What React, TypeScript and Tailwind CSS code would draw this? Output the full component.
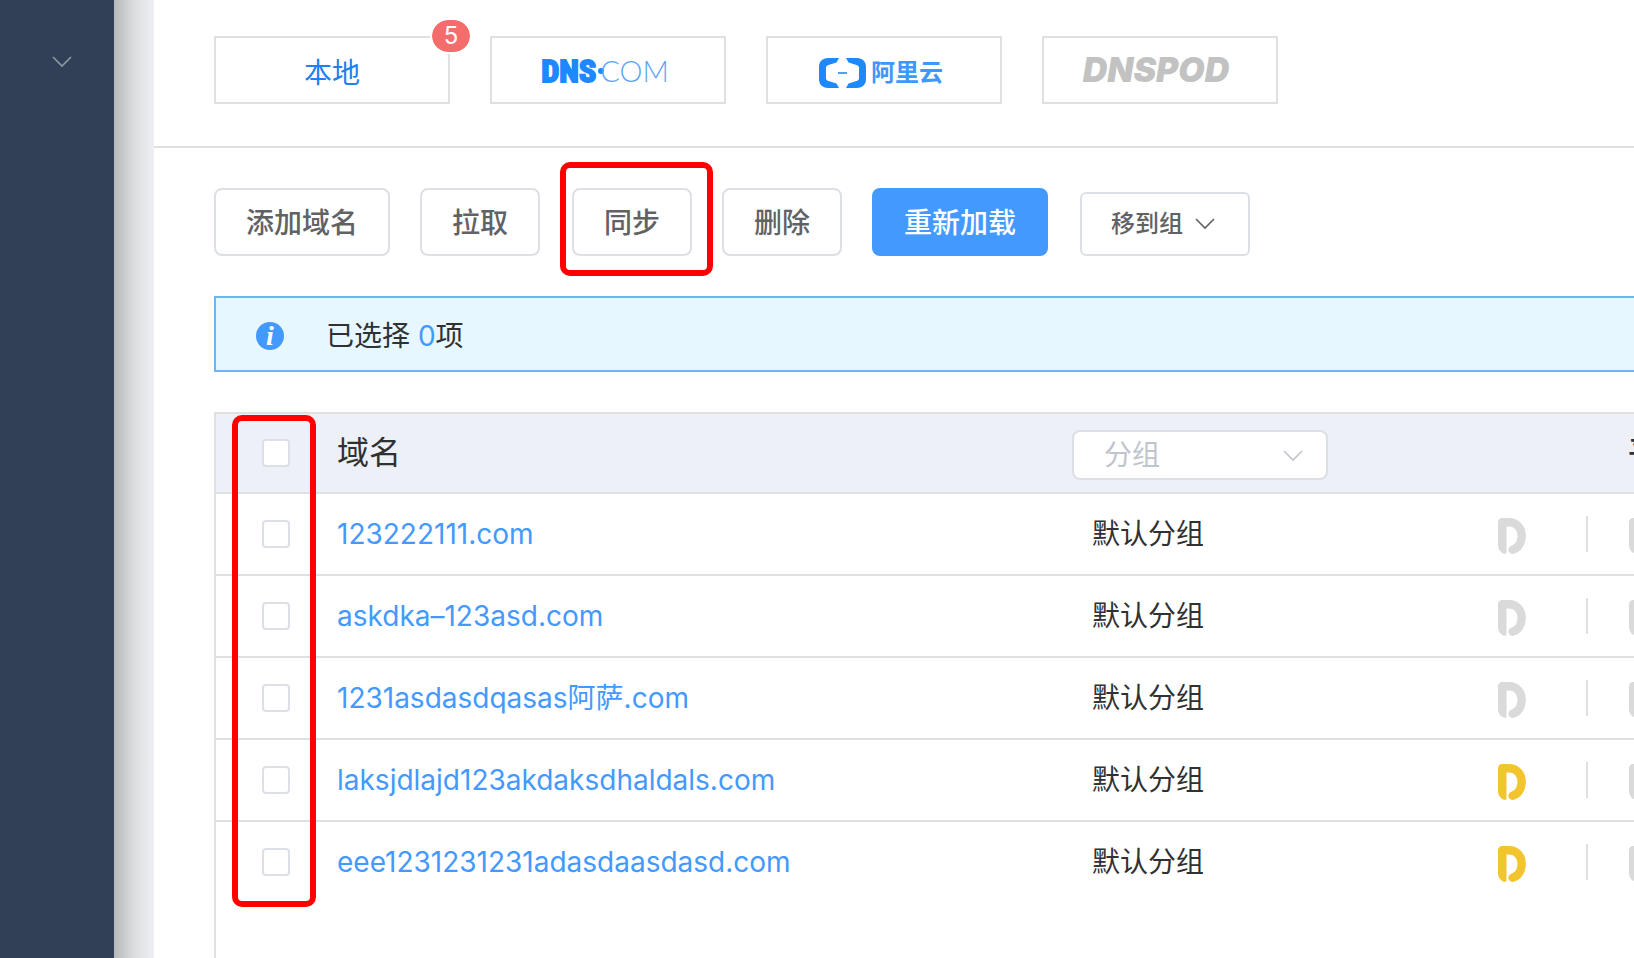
import React from 'react';

type Domain = { name: string; active: boolean };

const domains: Domain[] = [
  { name: '123222111.com', active: false },
  { name: 'askdka–123asd.com', active: false },
  { name: '1231asdasdqasas阿萨.com', active: false },
  { name: 'laksjdlajd123akdaksdhaldals.com', active: true },
  { name: 'eee1231231231adasdaasdasd.com', active: true },
];

function Chevron({ className }: { className: string }) {
  return (
    <svg viewBox="0 0 20 12" className={className} fill="none" stroke="currentColor" aria-hidden="true">
      <path d="M1 1l9 9 9-9" strokeWidth="1.6" />
    </svg>
  );
}

function ProviderMark({ className }: { className: string }) {
  return (
    <svg viewBox="0 0 28 36" className={className} aria-hidden="true">
      <path d="M0 5C0 1.500 1.500 0 5 0h3.500v34.500c0 1.100-1.200 1.600-2.600 1.200C2.500 34.500 0 31 0 27z" fill="currentColor" />
      <path d="M5 4.300h6c7.500 0 12.700 5.700 12.700 13.500 0 7-3.800 12.400-9.200 13.900" fill="none" stroke="currentColor" strokeWidth="8.400" strokeLinecap="round" />
    </svg>
  );
}

function DnsComLogo() {
  return (
    <span className="flex items-center pt-0.5 pr-1.5 leading-8">
      <span className="font-['Liberation_Sans_Narrow','Roboto_Condensed',sans-serif] text-[32px] font-bold text-[#1e88ff] [-webkit-text-stroke:2px_#1e88ff]">
        DNS
      </span>
      <span className="-mr-1 ml-0.5 size-1.5 rounded-full bg-[#1e88ff]" />
      <span className="font-[Lato,sans-serif] text-[29px] font-light text-[#5aa5fb]">COM</span>
    </span>
  );
}

function AliyunMark() {
  return (
    <svg viewBox="0 0 48 30" className="h-[30px] w-12" fill="#1e88ff" aria-hidden="true">
      <path d="M20 0H9C3.500 0 0 3.500 0 9v12c0 5.500 3.500 9 9 9h11l-2.500-4.500L9.500 23C7.700 22.500 7 21.500 7 20V10c0-1.500.7-2.500 2.500-3l8-2.500z" />
      <path d="M27 0h11c5.500 0 9 3.500 9 9v12c0 5.500-3.500 9-9 9H27l2.500-4.500 8-2.500c1.800-.5 2.500-1.500 2.500-3V10c0-1.500-.7-2.500-2.500-3l-8-2.500z" />
      <path d="M19 14h9v2h-9z" opacity=".8" />
    </svg>
  );
}

const tabClass = 'relative flex h-[68px] w-[236px] shrink-0 items-center justify-center border-2 border-[#e0e0e0] bg-white';
const buttonClass = 'h-[68px] shrink-0 rounded-lg border-2 border-[#dcdfe6] bg-white px-[30px] pt-0.5 font-medium text-[#606266]';
const checkClass = 'block size-7 appearance-none rounded-sm border-2 border-[#dcdfe6] bg-white checked:bg-[#4499ff]';

export default function App() {
  return (
    <div className="flex h-screen overflow-hidden bg-white font-[Inter,'Noto_Sans_CJK_SC',sans-serif] text-[28px] leading-10 text-[#303133]">
      <aside className="flex w-[114px] shrink-0 items-start justify-end bg-[#324057] pt-14 pr-[42px]">
        <button type="button" aria-label="展开菜单" className="text-[#8f98a6]">
          <Chevron className="h-3 w-5" />
        </button>
      </aside>
      <div className="w-10 shrink-0 bg-linear-to-r from-[#b7b8ba] via-[#dcdddf] to-[#eff0f3]" />
      <main className="flex min-w-0 flex-1 flex-col overflow-hidden">
        <nav className="flex shrink-0 gap-10 border-b-2 border-[#e0e0e0] pt-9 pb-[42px] pl-[60px]">
          <button type="button" className={`${tabClass} pt-1.5 text-[#2080f0]`}>
            本地
            <span className="absolute -top-5 -right-6 flex h-9 w-[42px] items-center justify-center rounded-full border-2 border-white bg-[#f56c6c] bg-clip-padding text-2xl text-white">
              5
            </span>
          </button>
          <button type="button" aria-label="DNS.COM" className={tabClass}>
            <DnsComLogo />
          </button>
          <button type="button" className={`${tabClass} gap-1 pt-1.5 pr-1.5 text-2xl font-bold text-[#3f97fb]`}>
            <AliyunMark />
            阿里云
          </button>
          <button type="button" className={`${tabClass} pr-2 text-[34px] font-black text-[#c2c2c2] italic`}>
            DNSPOD
          </button>
        </nav>
        <div className="flex shrink-0 items-end gap-8 pt-10 pl-[60px]">
          <div className="flex shrink-0 gap-[30px]">
            <button type="button" className={buttonClass}>添加域名</button>
            <button type="button" className={buttonClass}>拉取</button>
          </div>
          <div className="flex shrink-0 gap-[30px]">
            <div className="relative shrink-0">
              <button type="button" className={buttonClass}>同步</button>
              <span className="pointer-events-none absolute -top-[26px] -right-[21px] -bottom-5 -left-3 rounded-[10px] border-6 border-[#ff0000]" />
            </div>
            <button type="button" className={buttonClass}>删除</button>
            <button type="button" className="h-[68px] shrink-0 rounded-lg bg-[#4499ff] px-8 pt-0.5 font-medium text-white">重新加载</button>
          </div>
          <button type="button" className="flex h-16 w-[170px] shrink-0 items-center justify-center gap-3 rounded-md border-2 border-[#dcdfe6] pr-1 text-2xl font-medium text-[#606266]">
            移到组
            <Chevron className="h-3 w-5" />
          </button>
        </div>
        <div className="mt-10 ml-[60px] flex h-[76px] shrink-0 items-center border-2 border-r-0 border-[#6cb5ee] bg-[#e6f7ff] pt-1 pl-10">
          <span className="flex size-7 items-center justify-center rounded-full bg-[#4499ff] font-['Liberation_Serif',serif] text-[28px] leading-7 font-bold text-white italic">
            i
          </span>
          <span className="ml-[42px]">
            已选择 <span className="text-[#4499ff]">0</span>项
          </span>
        </div>
        <div className="relative mt-10 ml-[60px] flex-1 border-t-2 border-l-2 border-[#e0e0e0]">
          <table className="w-[1520px] table-fixed border-collapse text-left">
            <colgroup>
              <col className="w-[104px]" />
              <col className="w-[752px]" />
              <col className="w-[404px]" />
              <col className="w-[260px]" />
            </colgroup>
            <thead className="bg-[#edf0f6]">
              <tr className="h-[79px] border-b-2 border-[#e0e0e0]">
                <th className="pl-[46px]">
                  <input type="checkbox" aria-label="全选" className={checkClass} />
                </th>
                <th className="pl-[17px] text-[32px] font-normal">域名</th>
                <th className="pt-1 font-normal">
                  <div className="relative h-[50px] w-64">
                    <select aria-label="分组" className="size-full appearance-none rounded-lg border-2 border-[#dcdfe6] bg-white pl-[30px] text-[#c0c4cc]">
                      <option>分组</option>
                    </select>
                    <Chevron className="pointer-events-none absolute top-5 right-[25px] h-3 w-5 text-[#c0c4cc]" />
                  </div>
                </th>
                <th className="pb-1 pl-[152px] text-[30px] font-medium">平台</th>
              </tr>
            </thead>
            <tbody>
              {domains.map((domain) => (
                <tr key={domain.name} className="h-[82px] border-b-2 border-[#e0e0e0] last:border-transparent">
                  <td className="pl-[46px]">
                    <input type="checkbox" aria-label={domain.name} className={checkClass} />
                  </td>
                  <td className="pl-[17px]">
                    <a href="#domain" className="text-[#4499ff]">{domain.name}</a>
                  </td>
                  <td className="pl-5">默认分组</td>
                  <td>
                    <div className="flex items-center pl-[22px]">
                      <ProviderMark className={domain.active ? 'mt-1 h-9 w-7 shrink-0 text-[#f2c52f]' : 'mt-1 h-9 w-7 shrink-0 text-[#dadada]'} />
                      <span className="mr-[41px] ml-[60px] h-9 w-0.5 shrink-0 bg-[#e0e0e0]" />
                      <ProviderMark className="mt-1 h-9 w-7 shrink-0 text-[#dadada]" />
                    </div>
                  </td>
                </tr>
              ))}
            </tbody>
          </table>
          <span className="pointer-events-none absolute top-px left-4 h-[492px] w-[84px] rounded-[10px] border-6 border-[#ff0000]" />
        </div>
      </main>
    </div>
  );
}
